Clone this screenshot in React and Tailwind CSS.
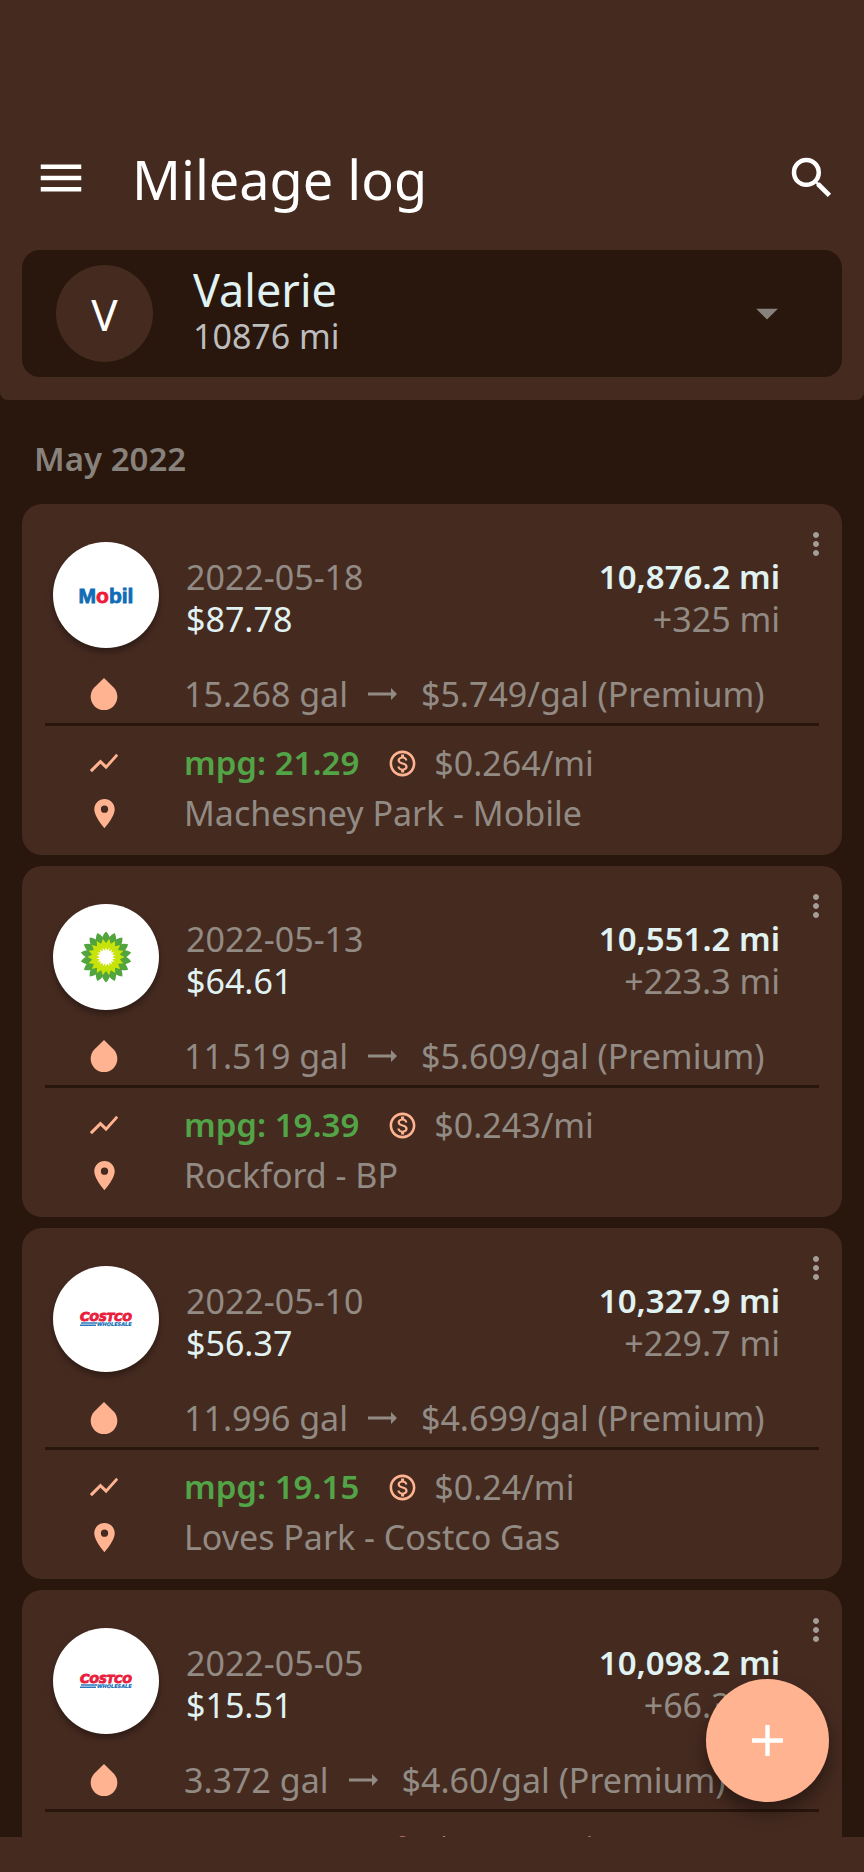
import React, { useState } from 'react';
import { MdMenu, MdSearch, MdMoreVert, MdShowChart, MdPlace, MdAdd, MdArrowDropDown, MdOutlineMonetizationOn } from 'react-icons/md';

const vehicles = [{ name: 'Valerie', odometer: '10876 mi' }];

const entries = [
  { date: '2022-05-18', brand: 'mobil', total: '$87.78', odometer: '10,876.2 mi', trip: '+325 mi', volume: '15.268 gal', price: '$5.749/gal (Premium)', mpg: '21.29', cost: '$0.264/mi', place: 'Machesney Park - Mobile' },
  { date: '2022-05-13', brand: 'bp', total: '$64.61', odometer: '10,551.2 mi', trip: '+223.3 mi', volume: '11.519 gal', price: '$5.609/gal (Premium)', mpg: '19.39', cost: '$0.243/mi', place: 'Rockford - BP' },
  { date: '2022-05-10', brand: 'costco', total: '$56.37', odometer: '10,327.9 mi', trip: '+229.7 mi', volume: '11.996 gal', price: '$4.699/gal (Premium)', mpg: '19.15', cost: '$0.24/mi', place: 'Loves Park - Costco Gas' },
  { date: '2022-05-05', brand: 'costco', total: '$15.51', odometer: '10,098.2 mi', trip: '+66.3 mi', volume: '3.372 gal', price: '$4.60/gal (Premium)', mpg: '19.66', cost: '$0.234/mi', place: 'Loves Park - Costco Gas' },
];

const petals = Array.from({ length: 18 }, (_, i) => i * 20);

function MobilLogo() {
  return (
    <svg viewBox="0 0 60 24" className="h-6 w-[60px] overflow-visible" aria-label="Mobil">
      <text x="30" y="20" textAnchor="middle" fontSize="21" className="font-['Liberation_Sans'] font-bold" fill="#0f6cb6" stroke="#0f6cb6" strokeWidth="0.8">
        M<tspan fill="#ed1b3a" stroke="#ed1b3a">o</tspan>bil
      </text>
    </svg>
  );
}

function BpLogo() {
  return (
    <svg viewBox="-26 -26 52 52" className="size-[52px]" aria-label="BP">
      {petals.map((a) => <path key={a} transform={`rotate(${a})`} fill="#52a43c" d="M0-25.5C3-22.5 4.6-19 4-14L0-6-4-14C-4.6-19-3-22.5 0-25.5Z" />)}
      {petals.map((a) => <path key={a} transform={`rotate(${a + 10})`} fill="#c8e30a" d="M0-18.5L2.8-13 2-6H-2L-2.8-13Z" />)}
      <circle r="14" fill="#c8e30a" />
      {petals.map((a) => <path key={a} transform={`rotate(${a})`} fill="#fff" d="M0-9.8L1.5-5H-1.5Z" />)}
      <circle r="7" fill="#fff" />
    </svg>
  );
}

function CostcoLogo() {
  return (
    <svg viewBox="0 0 52 16" className="h-4 w-[52px] overflow-visible" aria-label="Costco Wholesale">
      <g className="font-['DejaVu_Sans'] font-bold italic">
        <text x="0" y="10" fontSize="13" fill="#e8203c" stroke="#e8203c" strokeWidth="1">C<tspan fontSize="11">OSTCO</tspan></text>
        <text x="17" y="15" fontSize="5" fill="#0f6cb6" stroke="#0f6cb6" strokeWidth="0.2">WHOLESALE</text>
      </g>
      <path d="M1 12H17M0 14.3H16" stroke="#2b78bd" strokeWidth="1.4" />
    </svg>
  );
}

const logos = { mobil: MobilLogo, bp: BpLogo, costco: CostcoLogo };

function IconRow({ icon, children }) {
  return (
    <div className="flex h-[42px] items-center">
      <span className="mr-[21px] flex w-[118px] shrink-0 justify-center text-[#ffb391]">{icon}</span>
      {children}
    </div>
  );
}

function LogCard({ entry }) {
  const Logo = logos[entry.brand];
  return (
    <article className="relative shrink-0 rounded-[20px] bg-[#452a20] px-[23px] pb-[21px] pt-[38px]">
      <button aria-label="Entry options" className="absolute right-2 top-[22px] text-[#a39d98]">
        <MdMoreVert size={36} />
      </button>
      <div className="flex pl-2 pr-[39px]">
        <div className="flex size-[106px] shrink-0 items-center justify-center rounded-full bg-white shadow-[0_4px_6px_rgba(0,0,0,0.35)]">
          <Logo />
        </div>
        <div className="ml-[27px] flex flex-1 justify-between pt-[14px]">
          <div>
            <p>{entry.date}</p>
            <p className="text-[#e0f2f1]">{entry.total}</p>
          </div>
          <div className="text-right">
            <p className="text-[33px] font-semibold leading-[42px] text-[#e0f2f1]">{entry.odometer}</p>
            <p>{entry.trip}</p>
          </div>
        </div>
      </div>
      <div className="mt-[25px]">
        <IconRow icon={
          <svg viewBox="0 0 24 24" className="size-10" fill="currentColor">
            <path d="M17.66 8L12 2.35 6.34 8C4.78 9.56 4 11.64 4 13.64s.78 4.11 2.34 5.67 3.61 2.35 5.66 2.35 4.1-.79 5.66-2.35S20 15.64 20 13.64 19.22 9.56 17.66 8z" />
          </svg>
        }>
          <span>{entry.volume}</span>
          <svg viewBox="0 0 30 14" className="ml-5 mr-[23px] h-[14px] w-[30px]" fill="currentColor">
            <path d="M0 5.5H23V1L29 7 23 13V8.5H0Z" />
          </svg>
          <span>{entry.price}</span>
        </IconRow>
      </div>
      <hr className="mb-4 mt-2 border-t-[3px] border-[#29160c]" />
      <IconRow icon={<MdShowChart size={34} />}>
        <span className="text-[33px] font-semibold leading-[42px] text-[#52a447]">mpg: {entry.mpg}</span>
        <MdOutlineMonetizationOn size={31} className="ml-7 mr-4 text-[#ffb391]" />
        <span>{entry.cost}</span>
      </IconRow>
      <div className="mt-2">
        <IconRow icon={<MdPlace size={35} />}>
          <span>{entry.place}</span>
        </IconRow>
      </div>
    </article>
  );
}

export default function App() {
  const [vehicle, setVehicle] = useState('Valerie');
  const current = vehicles.find((v) => v.name === vehicle);

  return (
    <div className="flex h-screen flex-col bg-[#29160c] font-['Noto_Sans',sans-serif] text-[34px] leading-[42px] text-[#928b84]">
      <header className="shrink-0 rounded-b-lg bg-[#452a20] px-[22px] pb-[23px] pt-[130px]">
        <div className="flex h-24 items-center pl-3 pr-[3px] text-white">
          <button aria-label="Menu"><MdMenu size={54} /></button>
          <h1 className="ml-11 flex-1 pt-0.5 text-[54px] leading-[72px]">Mileage log</h1>
          <button aria-label="Search"><MdSearch size={54} /></button>
        </div>
        <div className="mt-6 flex h-[127px] items-center rounded-[18px] bg-[#29160c] pl-[34px]">
          <span className="flex size-[97px] items-center justify-center rounded-full bg-[#452a20] text-[44px] text-white">V</span>
          <div className="relative ml-10 flex-1 pb-1.5">
            <label htmlFor="vehicle" className="sr-only">Vehicle</label>
            <select id="vehicle" value={vehicle} onChange={(e) => setVehicle(e.target.value)}
                    className="block h-[50px] w-full appearance-none bg-transparent text-[45px] leading-[50px] text-[#e0f2f1]">
              {vehicles.map((v) => <option key={v.name}>{v.name}</option>)}
            </select>
            <p className="text-[#bdbdbd]">{current.odometer}</p>
            <MdArrowDropDown size={52} className="pointer-events-none absolute right-[49px] top-[22px] text-[#88827c]" />
          </div>
        </div>
      </header>

      <main className="relative min-h-0 flex-1">
        <div className="h-full overflow-hidden px-[22px]">
          <h2 className="pb-6 pl-3 pt-[38px] text-[33px] font-semibold leading-[42px] text-[#88827c]">May 2022</h2>
          <div className="flex flex-col gap-[11px]">
            {entries.map((e) => <LogCard key={e.date} entry={e} />)}
          </div>
        </div>
        <button aria-label="Add entry" className="absolute bottom-[35px] right-[35px] flex size-[123px] items-center justify-center rounded-full bg-[#ffb391] text-white shadow-[0_10px_18px_rgba(0,0,0,0.4)]">
          <MdAdd size={53} />
        </button>
      </main>
      <footer className="h-[35px] shrink-0 bg-[#452a20]" />
    </div>
  );
}
